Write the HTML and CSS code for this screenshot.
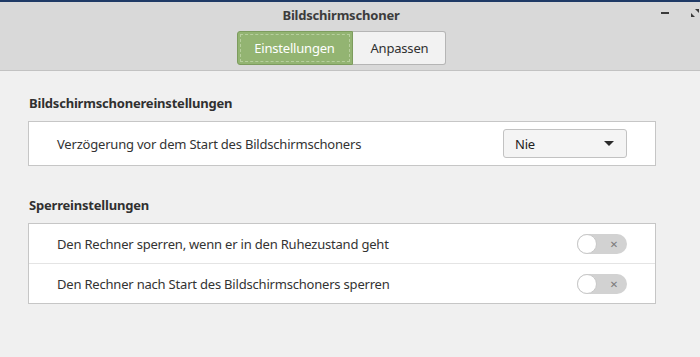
FILE: index.html
```html
<!DOCTYPE html>
<html lang="de">
<head>
    <meta charset="UTF-8">
    <title>Bildschirmschoner</title>
    <link rel="stylesheet" href="styles.css">
</head>
<body>
    <div class="desktop-strip"></div>
    <div class="window">
        <div class="header">
            <div class="title-row">
                <span class="title">Bildschirmschoner</span>
                <div class="window-controls">
                    <span class="ctrl-min"></span>
                    <svg class="ctrl-max" width="8" height="8" viewBox="0 0 8 8">
                        <path d="M4 0 H8 V4 Z M0 4 L4 8 H0 Z" fill="#3a3a3a"/>
                    </svg>
                </div>
            </div>
            <div class="stack-switcher">
                <button class="tab active"><span class="focus-ring">Einstellungen</span></button>
                <button class="tab">Anpassen</button>
            </div>
        </div>

        <div class="content">
            <h3 class="section-title">Bildschirmschonereinstellungen</h3>
            <div class="section-box">
                <div class="row single">
                    <span class="row-label">Verzögerung vor dem Start des Bildschirmschoners</span>
                    <div class="combo">
                        <span>Nie</span>
                        <span class="combo-arrow"></span>
                    </div>
                </div>
            </div>

            <h3 class="section-title">Sperreinstellungen</h3>
            <div class="section-box">
                <div class="row">
                    <span class="row-label">Den Rechner sperren, wenn er in den Ruhezustand geht</span>
                    <div class="switch"><span class="knob"></span><span class="switch-x">&#x2715;</span></div>
                </div>
                <div class="row">
                    <span class="row-label">Den Rechner nach Start des Bildschirmschoners sperren</span>
                    <div class="switch"><span class="knob"></span><span class="switch-x">&#x2715;</span></div>
                </div>
            </div>
        </div>
    </div>
</body>
</html>
```

FILE: styles.css
```css
body {
    margin: 0;
    font-family: "Noto Sans", "DejaVu Sans", sans-serif;
    font-size: 13px;
    letter-spacing: -0.2px;
    color: #303030;
    background-color: #f0f0f0;
    width: 700px;
    height: 357px;
    overflow: hidden;
}
.desktop-strip {
    height: 2px;
    background-color: #1f3a66;
}
.header {
    background-color: #d9d9d9;
    border-bottom: 1px solid #c2c2c2;
    height: 68px;
    padding-right: 18px;
}
.title-row {
    height: 29px;
    box-sizing: border-box;
    padding-bottom: 4px;
    display: flex;
    align-items: center;
    justify-content: center;
    position: relative;
}
.title {
    font-weight: bold;
    color: #3c3c3c;
    font-size: 13px;
}
.window-controls {
    position: absolute;
    right: -18px;
    top: 7px;
    display: flex;
    align-items: center;
    gap: 22px;
}
.ctrl-min {
    width: 8px;
    height: 2px;
    background-color: #3a3a3a;
}
.ctrl-max {
    margin-right: 1px;
}
.stack-switcher {
    display: flex;
    justify-content: center;
}
.tab {
    font-family: inherit;
    font-size: 13px;
    letter-spacing: -0.2px;
    height: 34px;
    padding: 0 18px;
    border: 1px solid #b5b5b5;
    background-color: #f2f2f2;
    color: #303030;
    margin: 0;
}
.tab:first-child {
    border-radius: 3px 0 0 3px;
}
.tab:last-child {
    border-radius: 0 3px 3px 0;
    border-left: none;
    width: 93px;
}
.tab.active {
    background-color: #93b472;
    border-color: #7d9c5e;
    color: #ffffff;
    padding: 2px;
    width: 116px;
}
.focus-ring {
    display: flex;
    align-items: center;
    justify-content: center;
    height: 100%;
    border: 1px dashed #b7cf9d;
    box-sizing: border-box;
}
.content {
    padding: 19px 44px 0 28px;
}
.section-title {
    font-size: 13px;
    font-weight: bold;
    color: #303030;
    margin: 4px 0 9px 1px;
}
.section-box {
    background-color: #ffffff;
    border: 1px solid #c6c6c6;
    margin-bottom: 30px;
}
.row {
    display: flex;
    align-items: center;
    justify-content: space-between;
    height: 39px;
    padding: 0 28px 0 28px;
}
.row.single {
    height: 43px;
}
.row + .row {
    border-top: 1px solid #e4e4e4;
}
.row-label {
    color: #333333;
}
.combo {
    width: 124px;
    height: 29px;
    box-sizing: border-box;
    border: 1px solid #c2c2c2;
    border-radius: 3px;
    background-color: #f4f4f4;
    display: flex;
    align-items: center;
    justify-content: space-between;
    padding: 0 12px 0 11px;
    color: #222222;
}
.combo-arrow {
    width: 0;
    height: 0;
    border-left: 5px solid transparent;
    border-right: 5px solid transparent;
    border-top: 5px solid #2a2a2a;
}
.switch {
    width: 50px;
    height: 20px;
    border-radius: 10px;
    background-color: #d2d2d2;
    position: relative;
    display: flex;
    align-items: center;
    justify-content: flex-end;
    padding-right: 9px;
    box-sizing: border-box;
}
.knob {
    position: absolute;
    left: 0;
    top: 0;
    width: 20px;
    height: 20px;
    box-sizing: border-box;
    border-radius: 50%;
    background-color: #ffffff;
    border: 1px solid #c8c8c8;
}
.switch-x {
    font-size: 10px;
    font-weight: bold;
    color: #7a7a7a;
}
```
